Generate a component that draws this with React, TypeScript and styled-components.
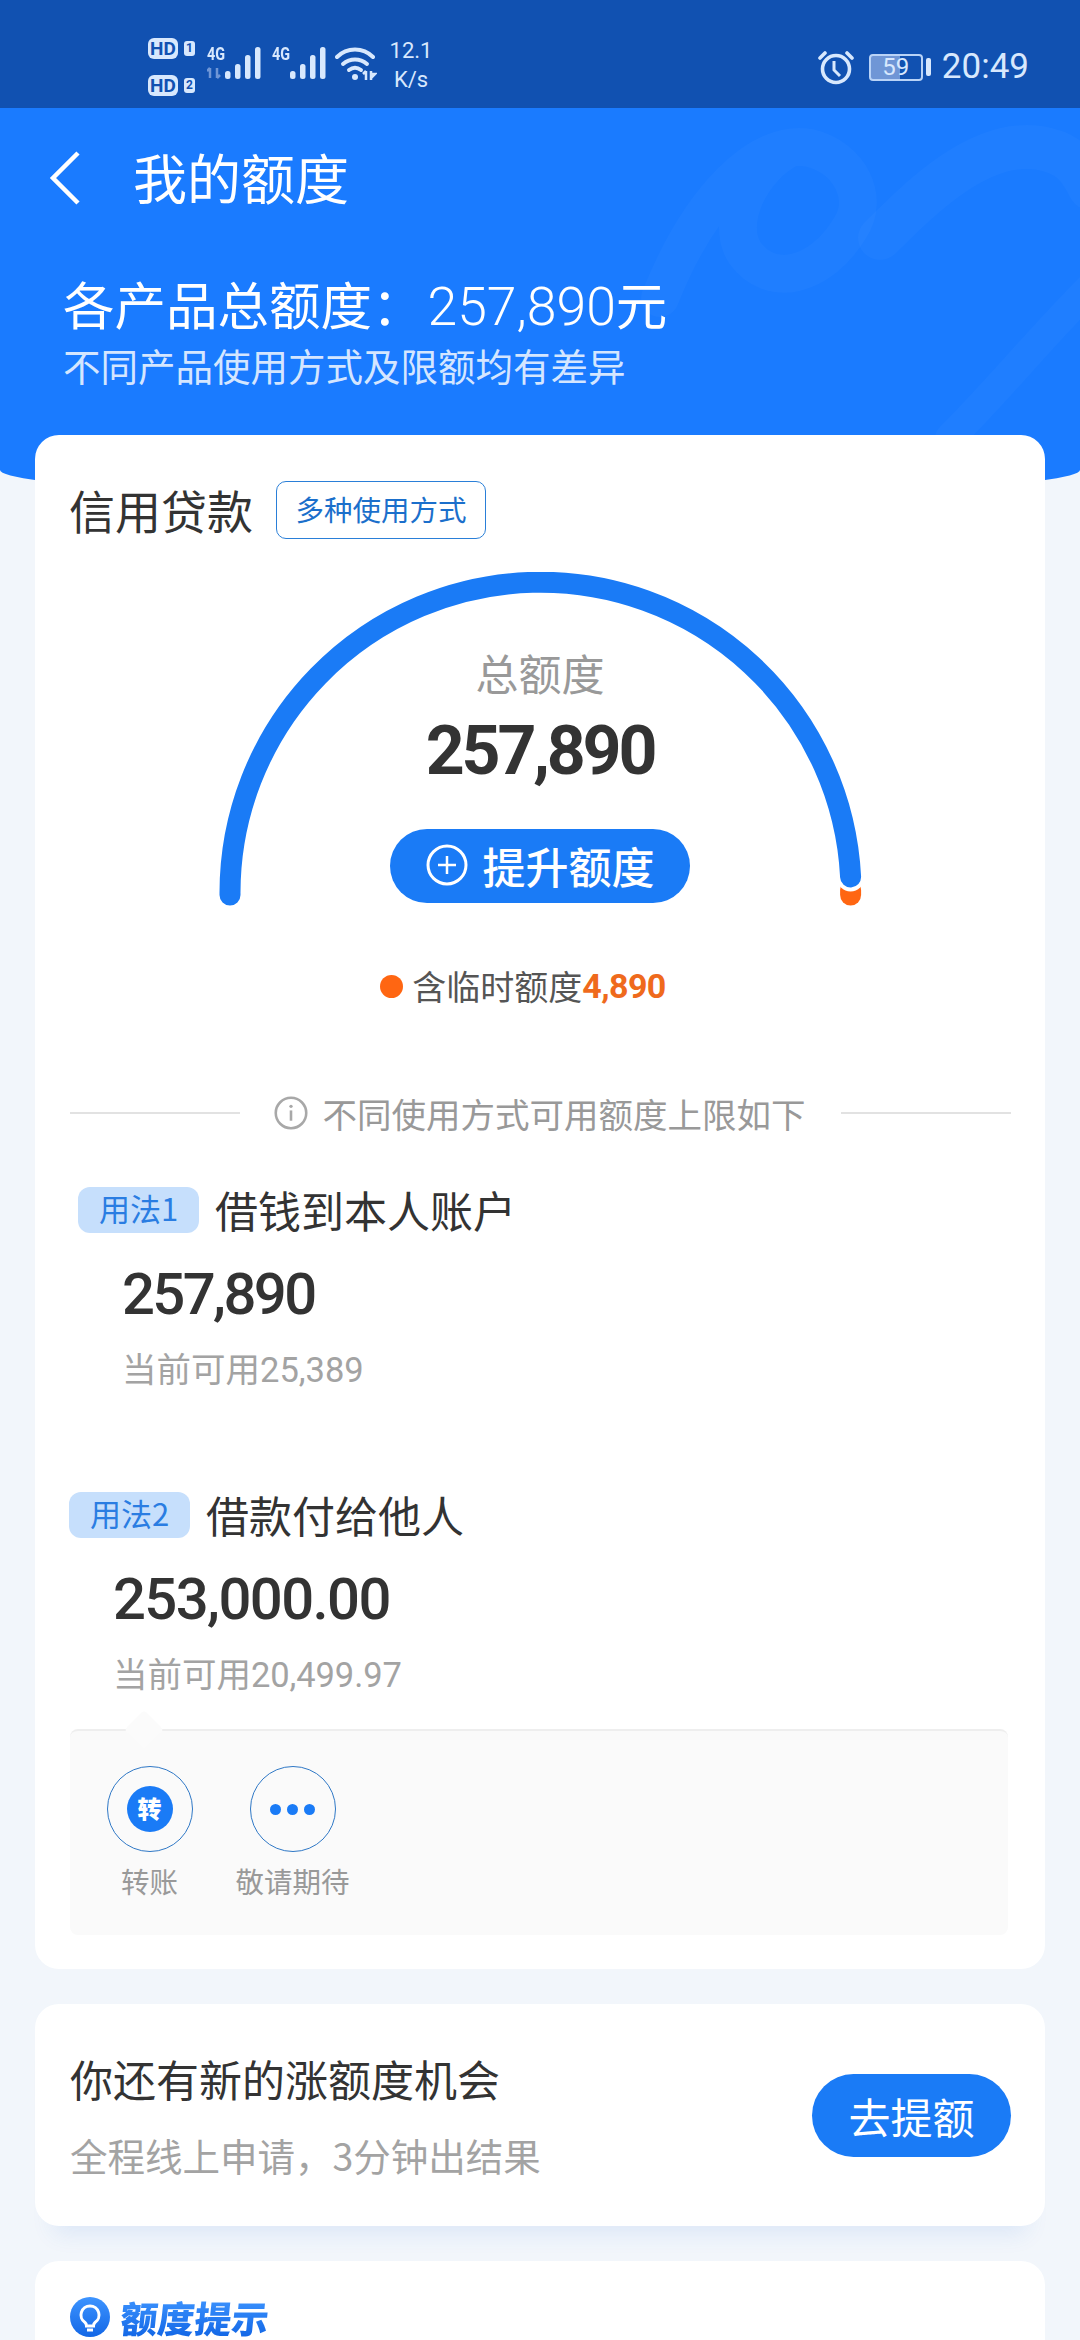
import React from "react";
import styled, { createGlobalStyle } from "styled-components";

const CJK = `"Noto Sans CJK SC", "Noto Sans", sans-serif`;
const NUM = `Roboto, "Noto Sans CJK SC", sans-serif`;

const Global = createGlobalStyle`
  html, body { margin: 0; padding: 0; background: #f2f6fb; }
  body { width: 1080px; height: 2340px; overflow: hidden; font-family: ${CJK}; }
  * { box-sizing: border-box; }
`;

const Page = styled.div`
  width: 1080px;
  height: 2340px;
  overflow: hidden;
  background: #f2f6fb;
`;

const StatusBar = styled.div`
  height: 108px;
  background: #1151b1;
  color: #d8e8fd;
  display: flex;
  align-items: center;
  padding: 26px 51px 0 148px;
`;
const SimCol = styled.div`
  display: flex;
  flex-direction: column;
  gap: 16px;
`;
const SimRow = styled.div`
  display: flex;
  align-items: center;
  gap: 6px;
`;
const HdBadge = styled.span`
  width: 30px;
  height: 21px;
  border-radius: 6px;
  background: #d8e8fd;
  color: #1151b1;
  font: 700 19px/21px ${NUM};
  text-align: center;
`;
const SimBadge = styled.span`
  width: 11px;
  height: 15px;
  border-radius: 3px;
  background: #d8e8fd;
  color: #1151b1;
  font: 700 12px/15px ${NUM};
  text-align: center;
`;
const Signal = styled.div<{ $ml: number }>`
  width: 54px;
  height: 34px;
  margin-left: ${(p) => p.$ml}px;
  margin-top: -8px;
  display: grid;
  grid-template-columns: 1fr;
`;
const SignalLabel = styled.span`
  grid-area: 1 / 1;
  font: 700 18px/15px ${NUM};
  transform: scaleX(0.8);
  transform-origin: left top;
`;
const SignalArt = styled.svg`
  grid-area: 1 / 1;
`;
const WifiIcon = styled.svg`
  margin-left: 9px;
  margin-top: -6px;
`;
const Speed = styled.div`
  margin-left: 12px;
  margin-top: -4px;
  width: 44px;
  display: flex;
  flex-direction: column;
  align-items: center;
  font: 400 22px/29px ${NUM};
`;
const Spacer = styled.div`
  flex: 1;
`;
const Battery = styled.div`
  width: 54px;
  height: 27px;
  margin-left: 15px;
  border: 2px solid #b9d3f7;
  border-radius: 4px;
  font: 400 24px/23px ${NUM};
  text-align: center;
  background: linear-gradient(90deg, #6f96d6 0 58%, transparent 58%);
`;
const BatteryTip = styled.div`
  width: 5px;
  height: 18px;
  margin-left: 3px;
  border-radius: 2px;
  background: #d8e8fd;
`;
const Clock = styled.span`
  margin-left: 11px;
  font: 400 35px/40px ${NUM};
`;

const Header = styled.header`
  position: relative;
  height: 390px;
  background: #1a7bff;
  color: #fff;
  border-radius: 0 0 50% 50% / 0 0 28px 28px;
  overflow: hidden;
  padding: 0 63px;
`;
const Swirl = styled.svg`
  position: absolute;
  left: 0;
  top: 0;
`;
const Nav = styled.div`
  position: relative;
  height: 140px;
  display: flex;
  align-items: center;
  gap: 49px;
  margin-left: -16px;
`;
const NavTitle = styled.h1`
  margin: -2px 0 0;
  font: 400 54px/60px ${CJK};
`;
const Summary = styled.div`
  position: relative;
  margin-top: 25px;
  font: 400 51.5px/60px ${CJK};
  white-space: nowrap;
`;
const SummaryNum = styled.span`
  font-family: ${NUM};
  font-weight: 300;
  font-size: 53.5px;
  margin-left: 4px;
`;
const SummarySub = styled.div`
  position: relative;
  margin-top: 6px;
  font: 400 37.5px/44px ${CJK};
  color: rgba(255, 255, 255, 0.82);
  white-space: nowrap;
`;

const Cards = styled.main`
  position: relative;
  margin-top: -63px;
  padding: 0 35px;
  display: flex;
  flex-direction: column;
`;
const Card = styled.section<{ $gap?: number }>`
  background: #fff;
  border-radius: 24px;
  padding: 0 35px;
  margin-top: ${(p) => p.$gap ?? 0}px;
`;

const TitleRow = styled.div`
  padding-top: 46px;
  display: flex;
  align-items: center;
  gap: 23px;
`;
const CardTitle = styled.h2`
  margin: -3px 0 0 -1px;
  font: 400 46px/58px ${CJK};
  color: #333;
`;
const OutlineTag = styled.span`
  height: 58px;
  width: 210px;
  border: 1.5px solid #2a7fd8;
  border-radius: 10px;
  color: #1b6fcb;
  font: 400 28.5px/53px ${CJK};
  text-align: center;
`;

const Gauge = styled.div`
  margin-top: 33px;
  display: grid;
  justify-content: center;
`;
const GaugeArc = styled.svg`
  grid-area: 1 / 1;
`;
const GaugeInner = styled.div`
  grid-area: 1 / 1;
  display: flex;
  flex-direction: column;
  align-items: center;
  padding-top: 75px;
`;
const GaugeLabel = styled.div`
  font: 400 43px/50px ${CJK};
  color: #999;
`;
const GaugeNumber = styled.div`
  margin-top: 14px;
  font: 700 68px/80px ${NUM};
  letter-spacing: -3.2px;
  color: #333;
`;
const RaiseButton = styled.button`
  margin-top: 38px;
  width: 300px;
  height: 74px;
  border: 0;
  border-radius: 37px;
  background: #1a7bf6;
  color: #fff;
  display: flex;
  align-items: center;
  justify-content: center;
  gap: 15px;
  padding: 0 0 2px;
  font: 500 43px/70px ${CJK};
`;

const Note = styled.div`
  margin-top: 57px;
  height: 44px;
  padding-right: 34px;
  display: flex;
  align-items: center;
  justify-content: center;
  font: 400 34px/44px ${CJK};
  color: #555;
`;
const NoteDot = styled.span`
  width: 23px;
  height: 23px;
  border-radius: 50%;
  background: #ff6612;
  margin-right: 9px;
`;
const NoteNum = styled.span`
  font: 700 34px/44px ${NUM};
  letter-spacing: -0.6px;
  color: #ef6a1c;
`;

const Divider = styled.div`
  margin-top: 83px;
  height: 44px;
  margin-right: -1px;
  display: flex;
  align-items: center;
  font: 400 34.5px/44px ${CJK};
  color: #999;
  &::before,
  &::after {
    content: "";
    width: 170px;
    height: 2px;
    background: #e2e2e2;
  }
`;
const DividerBody = styled.div`
  flex: 1;
  display: flex;
  align-items: center;
  justify-content: center;
  gap: 15px;
  padding-right: 2px;
`;

const Usage = styled.div<{ $indent: number; $gap: number }>`
  margin-top: ${(p) => p.$gap}px;
  margin-left: ${(p) => p.$indent}px;
`;
const UsageHead = styled.div`
  display: flex;
  align-items: center;
  gap: 16px;
`;
const UsageTag = styled.span`
  width: 121px;
  height: 46px;
  border-radius: 12px;
  background: #c6dffc;
  color: #2a7de2;
  font: 400 31px/42px ${CJK};
  text-align: center;
`;
const UsageTitle = styled.span`
  margin-top: -3px;
  font: 400 43px/46px ${CJK};
  color: #333;
`;
const UsageAmount = styled.div<{ $spacing: number }>`
  margin: 26px 0 0 44px;
  font: 500 58px/70px ${NUM};
  letter-spacing: ${(p) => p.$spacing}px;
  color: #333;
`;
const UsageSub = styled.div`
  margin: 16px 0 0 44px;
  font: 400 34.5px/44px ${CJK};
  color: #a3a3a3;
  white-space: nowrap;
`;
const UsageSubNum = styled.span<{ $spacing: number }>`
  font-family: ${NUM};
  letter-spacing: ${(p) => p.$spacing}px;
`;

const Panel = styled.div`
  position: relative;
  margin: 32px 2px 34px 0;
  height: 206px;
  background: #fafafa;
  border-top: 2px solid #eeeeee;
  border-radius: 8px;
  padding: 35px 0 0 8px;
  display: flex;
  &::before {
    content: "";
    position: absolute;
    left: 60px;
    top: -15px;
    width: 28px;
    height: 28px;
    background: #fbfbfb;
    transform: rotate(45deg);
    border-radius: 4px;
  }
`;
const PanelItem = styled.div`
  position: relative;
  width: 143px;
  display: flex;
  flex-direction: column;
  align-items: center;
`;
const PanelCircle = styled.div`
  width: 86px;
  height: 86px;
  border-radius: 50%;
  border: 1.5px solid #2f78c6;
  display: flex;
  align-items: center;
  justify-content: center;
  gap: 6px;
`;
const TurnBadge = styled.span`
  width: 46px;
  height: 46px;
  border-radius: 50%;
  background: #1a7bf6;
  color: #fff;
  font: 900 24px/44px ${CJK};
  text-align: center;
`;
const MoreDot = styled.span`
  width: 11px;
  height: 11px;
  border-radius: 50%;
  background: #1a7bf6;
`;
const PanelLabel = styled.span`
  margin-top: 9px;
  font: 400 28.5px/40px ${CJK};
  color: #999;
  white-space: nowrap;
`;

const OfferCard = styled(Card)`
  height: 222px;
  display: flex;
  align-items: center;
  justify-content: space-between;
  padding-right: 34px;
  box-shadow: 0 26px 22px -18px rgba(40, 110, 220, 0.1);
`;
const OfferText = styled.div`
  display: flex;
  flex-direction: column;
  gap: 22px;
  margin-top: -3px;
`;
const OfferTitle = styled.div`
  font: 400 43px/60px ${CJK};
  color: #333;
`;
const OfferSub = styled.div`
  font: 400 37.5px/50px ${CJK};
  color: #a3a3a3;
  white-space: nowrap;
`;
const OfferButton = styled.button`
  width: 199px;
  height: 83px;
  border: 0;
  border-radius: 42px;
  background: #1a7bf6;
  color: #fff;
  font: 400 42px/79px ${CJK};
  padding: 0;
`;

const TipsCard = styled(Card)`
  height: 200px;
  padding-top: 36px;
`;
const TipsHead = styled.div`
  display: flex;
  align-items: center;
  gap: 11px;
`;
const TipsTitle = styled.span`
  font: 900 37px/40px ${CJK};
  background: linear-gradient(180deg, #3d94ff, #1367e6);
  -webkit-background-clip: text;
  background-clip: text;
  color: transparent;
  transform: skewX(-6deg);
`;

const Bars = ({ x }: { x: number }) => (
  <>
    {[
      { h: 8, o: 0 },
      { h: 15, o: 10 },
      { h: 24, o: 20 },
      { h: 32, o: 30 },
    ].map((b) => (
      <rect key={b.o} x={x + b.o} y={33 - b.h} width={5.5} height={b.h} rx={2.5} fill="#d8e8fd" />
    ))}
  </>
);

export default function App() {
  return (
    <Page>
      <Global />
      <StatusBar>
        <SimCol>
          <SimRow>
            <HdBadge>HD</HdBadge>
            <SimBadge>1</SimBadge>
          </SimRow>
          <SimRow>
            <HdBadge>HD</HdBadge>
            <SimBadge>2</SimBadge>
          </SimRow>
        </SimCol>
        <Signal $ml={12}>
          <SignalLabel>4G</SignalLabel>
          <SignalArt width="54" height="34" viewBox="0 0 54 34">
            <Bars x={18} />
            <path d="M3 32V22M0 25l3-3M10 22v10M13 29l-3 3" stroke="#6f96d6" strokeWidth="2.5" fill="none" />
          </SignalArt>
        </Signal>
        <Signal $ml={11}>
          <SignalLabel>4G</SignalLabel>
          <SignalArt width="54" height="34" viewBox="0 0 54 34">
            <Bars x={18} />
          </SignalArt>
        </Signal>
        <WifiIcon width="42" height="34" viewBox="0 0 42 34" fill="none" stroke="#d8e8fd" strokeWidth="4" strokeLinecap="round">
          <path d="M2 10C12 0 28 0 38 10" />
          <path d="M8 17c7-6 17-6 24 0" />
          <path d="M14 23c4-3 8-3 12 0" />
          <circle cx="20" cy="30" r="3" fill="#d8e8fd" stroke="none" />
          <path d="M31 33V24M28 27l3-3" strokeWidth="2.5" strokeLinecap="butt" />
          <path d="M36 24v9M36 31l4-4H36" strokeWidth="2.5" strokeLinecap="butt" />
        </WifiIcon>
        <Speed>
          <span>12.1</span>
          <span>K/s</span>
        </Speed>
        <Spacer />
        <svg width="36" height="36" viewBox="0 0 36 36" fill="none" stroke="#d8e8fd" strokeWidth="3.6" strokeLinecap="round">
          <circle cx="18" cy="20" r="13.5" />
          <path d="M16 12v9l6 6" strokeWidth="3" strokeLinecap="butt" />
          <path d="M2 9l5-5M34 9l-5-5" />
        </svg>
        <Battery>59</Battery>
        <BatteryTip />
        <Clock>20:49</Clock>
      </StatusBar>

      <Header>
        <Swirl width="1080" height="390" viewBox="0 0 1080 390" fill="none" stroke="#ffffff" strokeOpacity="0.022" strokeLinecap="round">
          <path d="M660 190C700 90 760 30 810 40C850 50 870 90 850 120C820 170 770 180 745 145C725 115 750 60 790 40" strokeWidth="38" />
          <path d="M880 130C920 90 980 30 1040 40C1070 45 1080 60 1090 80" strokeWidth="44" />
          <path d="M950 330C1000 280 1040 230 1090 180" strokeWidth="30" />
        </Swirl>
        <Nav>
          <svg width="37" height="56" viewBox="0 0 37 56" fill="none" stroke="#fff" strokeWidth="4.5">
            <path d="M31 3L6 28l25 25" />
          </svg>
          <NavTitle>我的额度</NavTitle>
        </Nav>
        <Summary>
          各产品总额度：<SummaryNum>257,890</SummaryNum>元
        </Summary>
        <SummarySub>不同产品使用方式及限额均有差异</SummarySub>
      </Header>

      <Cards>
        <Card>
          <TitleRow>
            <CardTitle>信用贷款</CardTitle>
            <OutlineTag>多种使用方式</OutlineTag>
          </TitleRow>

          <Gauge>
            <GaugeArc width="660" height="335" viewBox="0 0 660 335" fill="none">
              <path d="M640.6 318v5" stroke="#ff6612" strokeWidth="21" strokeLinecap="round" />
              <path d="M640.6 305v1" stroke="#ffffff" strokeWidth="27" strokeLinecap="round" />
              <path d="M20 323V321A310.5 310.5 0 0 1 640.6 305" stroke="#1a7bf6" strokeWidth="21" strokeLinecap="round" />
            </GaugeArc>
            <GaugeInner>
              <GaugeLabel>总额度</GaugeLabel>
              <GaugeNumber>257,890</GaugeNumber>
              <RaiseButton>
                <svg width="42" height="42" viewBox="0 0 42 42" fill="none" stroke="#fff" strokeWidth="3">
                  <circle cx="21" cy="21" r="19" />
                  <path d="M21 12v18M12 21h18" strokeWidth="2.5" />
                </svg>
                提升额度
              </RaiseButton>
            </GaugeInner>
          </Gauge>

          <Note>
            <NoteDot />
            含临时额度<NoteNum>4,890</NoteNum>
          </Note>

          <Divider>
            <DividerBody>
              <svg width="34" height="34" viewBox="0 0 33 33" fill="none" stroke="#a8a8a8" strokeWidth="2.5">
                <circle cx="16.5" cy="16.5" r="14.8" />
                <path d="M16.5 14v10" />
                <circle cx="16.5" cy="10" r="1.6" fill="#a8a8a8" stroke="none" />
              </svg>
              不同使用方式可用额度上限如下
            </DividerBody>
          </Divider>

          <Usage $indent={8} $gap={52}>
            <UsageHead>
              <UsageTag>用法1</UsageTag>
              <UsageTitle>借钱到本人账户</UsageTitle>
            </UsageHead>
            <UsageAmount $spacing={-2.6}>257,890</UsageAmount>
            <UsageSub>
              当前可用<UsageSubNum $spacing={0}>25,389</UsageSubNum>
            </UsageSub>
          </Usage>

          <Usage $indent={-1} $gap={100}>
            <UsageHead>
              <UsageTag>用法2</UsageTag>
              <UsageTitle>借款付给他人</UsageTitle>
            </UsageHead>
            <UsageAmount $spacing={-1.6}>253,000.00</UsageAmount>
            <UsageSub>
              当前可用<UsageSubNum $spacing={-0.1}>20,499.97</UsageSubNum>
            </UsageSub>
          </Usage>

          <Panel>
            <PanelItem>
              <PanelCircle>
                <TurnBadge>转</TurnBadge>
              </PanelCircle>
              <PanelLabel>转账</PanelLabel>
            </PanelItem>
            <PanelItem>
              <PanelCircle>
                <MoreDot />
                <MoreDot />
                <MoreDot />
              </PanelCircle>
              <PanelLabel>敬请期待</PanelLabel>
            </PanelItem>
          </Panel>
        </Card>

        <OfferCard $gap={35}>
          <OfferText>
            <OfferTitle>你还有新的涨额度机会</OfferTitle>
            <OfferSub>全程线上申请，3分钟出结果</OfferSub>
          </OfferText>
          <OfferButton>去提额</OfferButton>
        </OfferCard>

        <TipsCard $gap={35}>
          <TipsHead>
            <svg width="40" height="40" viewBox="0 0 40 40">
              <defs>
                <linearGradient id="tipGrad" x1="0" y1="0" x2="0" y2="1">
                  <stop offset="0" stopColor="#3d94ff" />
                  <stop offset="1" stopColor="#1367e6" />
                </linearGradient>
              </defs>
              <circle cx="20" cy="20" r="20" fill="url(#tipGrad)" />
              <path d="M20 9a9 9 0 0 0-5 16.5c1 .8 1.5 2 1.5 3.5h7c0-1.5.5-2.7 1.5-3.5A9 9 0 0 0 20 9z" fill="none" stroke="#fff" strokeWidth="3" />
              <path d="M17 33h6" stroke="#fff" strokeWidth="3" />
            </svg>
            <TipsTitle>额度提示</TipsTitle>
          </TipsHead>
        </TipsCard>
      </Cards>
    </Page>
  );
}
